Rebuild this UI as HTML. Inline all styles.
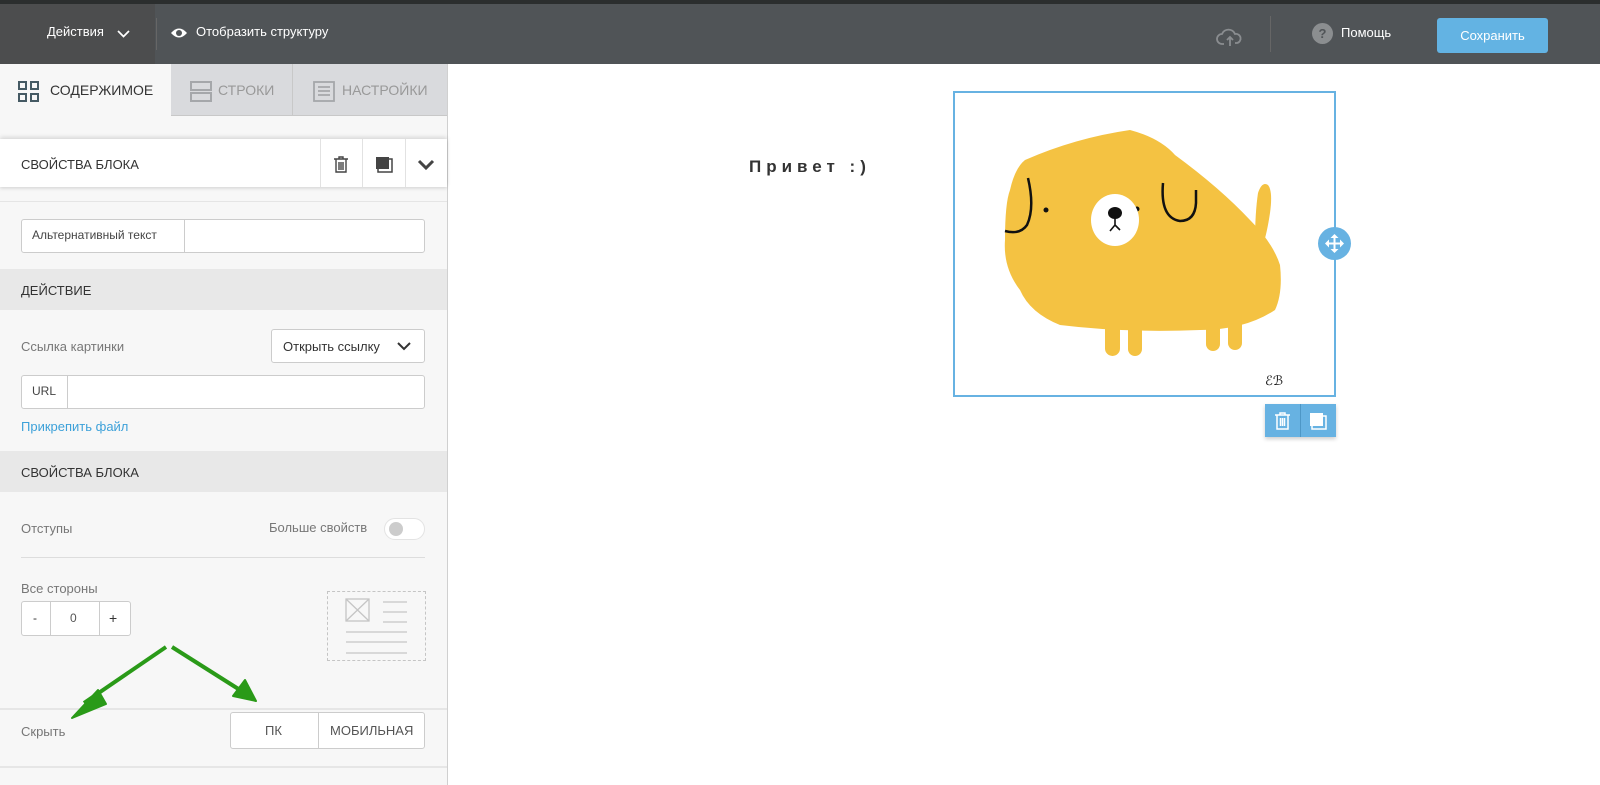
<!DOCTYPE html>
<html><head><meta charset="utf-8"><style>
*{box-sizing:border-box;margin:0;padding:0}
body{width:1600px;height:785px;overflow:hidden;font-family:"Liberation Sans",sans-serif;background:#fff;position:relative;font-size:13px;color:#333}
.a{position:absolute}
.top{left:0;top:0;width:1600px;height:64px;background:#505457;border-top:4px solid #2b2e2e}
.panel{left:0;top:64px;width:448px;height:721px;background:#f7f7f7;border-right:1px solid #d0d0d0}
.sec{left:0;width:447px;height:41px;background:#e8e8e8;font-size:13px;padding:14px 21px;color:#333}
.inp{background:#fff;border:1px solid #ccc;border-radius:3px}
.lbl{color:#777;font-size:13px}
</style></head><body>
<div class="a top">
 <div class="a" style="left:0;top:0;width:155px;height:60px;background:#4c4d4e"></div>
 <div class="a" style="left:47px;top:20px;color:#fff;font-size:13px">Действия</div>
 <svg class="a" style="left:117px;top:26px" width="13" height="9"><path d="M1 1l5.5 5.5L12 1" stroke="#fff" stroke-width="1.7" fill="none"/></svg>
 <div class="a" style="left:156px;top:14px;width:1px;height:32px;background:#666"></div>
 <svg class="a" style="left:170px;top:22px" width="18" height="14"><path d="M1 7Q9 -2 17 7Q9 16 1 7z" fill="#fff"/><circle cx="9" cy="7" r="3" fill="#505457"/></svg>
 <div class="a" style="left:196px;top:20px;color:#fff;font-size:13px">Отобразить структуру</div>
 <svg class="a" style="left:1216px;top:24px" width="28" height="20"><path d="M8 16H6a5 5 0 010-10 7 7 0 0113 0 4.5 4.5 0 012 9h-2M14 18V9m-3 3l3-3 3 3" stroke="#8a8d90" stroke-width="1.8" fill="none"/></svg>
 <div class="a" style="left:1270px;top:12px;width:1px;height:36px;background:#666"></div>
 <div class="a" style="left:1312px;top:19px;width:21px;height:21px;border-radius:50%;background:#8b8e90;color:#505457;font-weight:bold;text-align:center;line-height:21px;font-size:13px">?</div>
 <div class="a" style="left:1341px;top:21px;color:#fff;font-size:13px">Помощь</div>
 <div class="a" style="left:1437px;top:14px;width:111px;height:35px;background:#63b3e3;border-radius:3px;color:#fff;text-align:center;line-height:35px;font-size:13px">Сохранить</div>
</div>
<div class="a panel">
 <div class="a" style="left:171px;top:0;width:276px;height:52px;background:#d9dadd;border-bottom:1px solid #c8c8c8"></div>
 <div class="a" style="left:292px;top:0;width:1px;height:52px;background:#c8c8c8"></div>
 <svg class="a" style="left:18px;top:17px" width="22" height="21" fill="none" stroke="#455a64" stroke-width="2"><rect x="1" y="1" width="7" height="7"/><rect x="13" y="1" width="7" height="7"/><rect x="1" y="13" width="7" height="7"/><rect x="13" y="13" width="7" height="7"/></svg>
 <div class="a" style="left:50px;top:18px;font-size:14px;color:#333">СОДЕРЖИМОЕ</div>
 <svg class="a" style="left:190px;top:17px" width="22" height="21" fill="none" stroke="#a5a7aa" stroke-width="2"><rect x="1" y="1" width="20" height="8"/><rect x="1" y="12" width="20" height="8"/></svg>
 <div class="a" style="left:218px;top:18px;font-size:14px;color:#999">СТРОКИ</div>
 <svg class="a" style="left:313px;top:17px" width="22" height="21" fill="none" stroke="#a5a7aa" stroke-width="1.8"><rect x="1" y="1" width="20" height="19"/><path d="M5 6h12M5 10h12M5 14h12"/></svg>
 <div class="a" style="left:342px;top:18px;font-size:14px;color:#999">НАСТРОЙКИ</div>
 <div class="a" style="left:0;top:75px;width:447px;height:48px;background:#fff;box-shadow:0 -2px 4px rgba(0,0,0,.12),0 2px 3px rgba(0,0,0,.1)"></div>
 <div class="a" style="left:21px;top:93px;font-size:13px;color:#333">СВОЙСТВА БЛОКА</div>
 <div class="a" style="left:320px;top:75px;width:1px;height:48px;background:#e2e2e2"></div>
 <div class="a" style="left:362px;top:75px;width:1px;height:48px;background:#e2e2e2"></div>
 <div class="a" style="left:405px;top:75px;width:1px;height:48px;background:#e2e2e2"></div>
 <svg class="a" style="left:333px;top:92px" width="16" height="17" fill="none" stroke="#444" stroke-width="1.4"><path d="M1 3h14M6 3V1h4v2M3 3v13h10V3M6 6v8M8 6v8M10 6v8"/></svg>
 <svg class="a" style="left:375px;top:92px" width="18" height="17"><rect x="3" y="3" width="14" height="13" fill="none" stroke="#444" stroke-width="1.5"/><rect x="1" y="1" width="13" height="12" fill="#444"/></svg>
 <svg class="a" style="left:417px;top:95px" width="18" height="12"><path d="M2 2l7 7 7-7" stroke="#444" stroke-width="3" fill="none"/></svg>
 <div class="a" style="left:0;top:137px;width:447px;height:1px;background:#e5e5e5"></div>
 <div class="a inp" style="left:21px;top:155px;width:404px;height:34px"></div>
 <div class="a" style="left:184px;top:155px;width:1px;height:34px;background:#ccc"></div>
 <div class="a" style="left:32px;top:164px;font-size:12px;color:#444">Альтернативный текст</div>
</div>
<div class="a sec" style="top:269px">ДЕЙСТВИЕ</div>
<div class="a lbl" style="left:21px;top:339px">Ссылка картинки</div>
<div class="a inp" style="left:271px;top:329px;width:154px;height:34px"></div>
<div class="a" style="left:283px;top:339px;font-size:13px;color:#333">Открыть ссылку</div>
<svg class="a" style="left:397px;top:342px" width="14" height="9"><path d="M1 1l6 6 6-6" stroke="#333" stroke-width="2" fill="none"/></svg>
<div class="a inp" style="left:21px;top:375px;width:404px;height:34px"></div>
<div class="a" style="left:67px;top:375px;width:1px;height:34px;background:#ccc"></div>
<div class="a" style="left:32px;top:384px;font-size:12px;color:#444">URL</div>
<div class="a" style="left:21px;top:419px;color:#3da1d9;font-size:13px">Прикрепить файл</div>
<div class="a sec" style="top:451px">СВОЙСТВА БЛОКА</div>
<div class="a lbl" style="left:21px;top:521px">Отступы</div>
<div class="a lbl" style="left:269px;top:520px">Больше свойств</div>
<div class="a" style="left:384px;top:518px;width:41px;height:22px;border-radius:11px;background:#fff;border:1px solid #e3e3e3"></div>
<div class="a" style="left:389px;top:522px;width:14px;height:14px;border-radius:50%;background:#ccc"></div>
<div class="a" style="left:21px;top:557px;width:404px;height:1px;background:#ddd"></div>
<div class="a lbl" style="left:21px;top:581px">Все стороны</div>
<div class="a inp" style="left:21px;top:601px;width:110px;height:35px"></div>
<div class="a" style="left:50px;top:601px;width:1px;height:35px;background:#ccc"></div>
<div class="a" style="left:99px;top:601px;width:1px;height:35px;background:#ccc"></div>
<div class="a" style="left:33px;top:611px;font-size:12px">-</div>
<div class="a" style="left:70px;top:611px;font-size:12px;color:#555">0</div>
<div class="a" style="left:109px;top:610px;font-size:14px">+</div>
<div class="a" style="left:327px;top:591px;width:99px;height:70px;border:1px dashed #c5c5c5"></div>
<svg class="a" style="left:344px;top:598px" width="66" height="58" stroke="#c5c5c5" stroke-width="1.3" fill="none"><rect x="2" y="1" width="23" height="22"/><path d="M2 1l23 22M25 1L2 23M39 4h24M39 14h24M39 24h24M2 34h61M2 44h61M2 55h61"/></svg>
<div class="a" style="left:0;top:708px;width:447px;height:2px;background:#e6e6e6"></div>
<div class="a lbl" style="left:21px;top:724px">Скрыть</div>
<div class="a inp" style="left:230px;top:712px;width:195px;height:37px"></div>
<div class="a" style="left:318px;top:712px;width:1px;height:37px;background:#ccc"></div>
<div class="a" style="left:265px;top:723px;color:#555">ПК</div>
<div class="a" style="left:330px;top:723px;color:#555">МОБИЛЬНАЯ</div>
<div class="a" style="left:0;top:766px;width:447px;height:2px;background:#e6e6e6"></div>
<svg class="a" style="left:60px;top:640px" width="200" height="85"><g fill="#2a9a18" stroke="#2a9a18" stroke-linejoin="round"><path d="M106 7L24 63" stroke-width="4"/><path d="M12 78L38 50L46 64Z" stroke-width="2"/><path d="M112 7L180 50" stroke-width="4"/><path d="M196 61L185 40L173 56Z" stroke-width="2"/></g></svg>
<div class="a" style="left:749px;top:157px;font-size:17px;font-weight:bold;letter-spacing:5px;color:#333">Привет :)</div>
<div class="a" style="left:953px;top:91px;width:383px;height:306px;border:2px solid #67b2e2"></div>
<svg class="a" style="left:955px;top:93px" width="379" height="302">
 <path d="M70 67Q120 45 175 37Q205 45 220 62Q265 95 295 127Q318 150 325 172Q328 200 320 217Q290 237 245 237Q170 240 105 232Q75 220 65 197Q48 175 50 147Q50 110 55 97Q60 75 70 67z" fill="#f4c242"/>
 <rect x="150" y="215" width="15" height="48" rx="7.5" fill="#f4c242"/><rect x="173" y="215" width="14" height="48" rx="7" fill="#f4c242"/>
 <rect x="251" y="215" width="14" height="43" rx="7" fill="#f4c242"/><rect x="273" y="215" width="14" height="42" rx="7" fill="#f4c242"/>
 <path d="M300 150Q300 120 303 100Q307 88 313 92Q318 98 315 120Q312 140 308 152z" fill="#f4c242"/>
 <path d="M73 85Q80 115 72 132Q65 142 50 138" stroke="#111" stroke-width="2.5" fill="none"/>
 <path d="M208 90Q205 125 225 128Q240 128 241 110V97" stroke="#111" stroke-width="2.5" fill="none"/>
 <circle cx="91" cy="117" r="2.5" fill="#111"/><circle cx="182" cy="116" r="2.5" fill="#111"/>
 <ellipse cx="160" cy="127" rx="24" ry="26" fill="#fff"/>
 <ellipse cx="160" cy="120" rx="7" ry="6" fill="#111"/>
 <path d="M160 122v10l-5 6M160 132l5 5" stroke="#111" stroke-width="1.6" fill="none"/>
 <text x="310" y="292" font-size="13" fill="#111" font-family="Liberation Serif">ℰℬ</text>
</svg>
<div class="a" style="left:1318px;top:227px;width:33px;height:33px;border-radius:50%;background:#67b2e2"></div>
<svg class="a" style="left:1324px;top:233px" width="21" height="21" fill="#fff"><path d="M10.5 1l4 4h-3v4.5h4.5v-3l4 4-4 4v-3h-4.5v4.5h3l-4 4-4-4h3v-4.5H5v3l-4-4 4-4v3h4.5V5h-3z"/></svg>
<div class="a" style="left:1265px;top:404px;width:71px;height:33px;background:#67b2e2;box-shadow:0 2px 4px rgba(0,0,0,.2)"></div>
<div class="a" style="left:1300px;top:404px;width:1px;height:33px;background:#4d97c6"></div>
<svg class="a" style="left:1274px;top:412px" width="17" height="18" fill="none" stroke="#fff" stroke-width="1.5"><path d="M1 3h15M6 3V1h5v2M3 3v14h11V3M6.5 6v8M8.5 6v8M10.5 6v8"/></svg>
<svg class="a" style="left:1309px;top:412px" width="19" height="18"><rect x="3" y="4" width="14" height="13" fill="none" stroke="#fff" stroke-width="1.5"/><rect x="1" y="1" width="13" height="13" fill="#fff"/></svg>
</body></html>
